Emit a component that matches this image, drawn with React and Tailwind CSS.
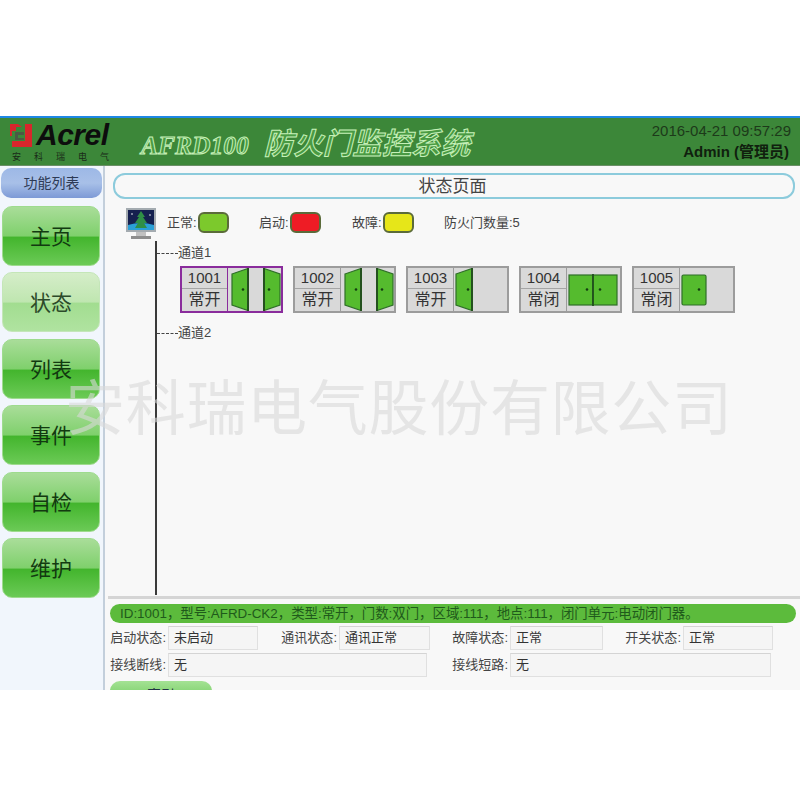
const font = "font-['Liberation_Sans','Noto_Sans_CJK_SC',sans-serif]";

const menu = [
  { label: "主页" },
  { label: "状态", active: true },
  { label: "列表" },
  { label: "事件" },
  { label: "自检" },
  { label: "维护" },
];

const doors = [
  { id: "1001", mode: "常开", type: "double-open", selected: true },
  { id: "1002", mode: "常开", type: "double-open" },
  { id: "1003", mode: "常开", type: "single-open" },
  { id: "1004", mode: "常闭", type: "double-closed" },
  { id: "1005", mode: "常闭", type: "single-closed" },
];

const DoorIcon = ({ type }) => {
  const fill = "#55bb2e";
  const line = "#2f6f28";
  const dot = "#143d10";
  return (
    <svg width="56" height="44" viewBox="0 0 56 44" className="block ml-[1px]">
      {type === "double-open" && (
        <>
          <path d="M3 6 L19 0.5 V42.5 L3 37 Z" fill={fill} stroke={line} strokeWidth="1.2" />
          <path d="M19 0 V43" stroke="#24511f" strokeWidth="2" />
          <path d="M35 0.5 L51 6 V37 L35 42.5 Z" fill={fill} stroke={line} strokeWidth="1.2" />
          <path d="M35 0 V43" stroke="#24511f" strokeWidth="2" />
          <circle cx="14" cy="21.5" r="1.3" fill={dot} />
          <circle cx="40" cy="21.5" r="1.3" fill={dot} />
        </>
      )}
      {type === "single-open" && (
        <>
          <path d="M1 6 L17 0.5 V42.5 L1 37 Z" fill={fill} stroke={line} strokeWidth="1.2" />
          <path d="M17 0 V43" stroke="#24511f" strokeWidth="2" />
          <circle cx="13" cy="21.5" r="1.3" fill={dot} />
        </>
      )}
      {type === "double-closed" && (
        <>
          <rect x="1" y="7" width="24" height="30" fill={fill} stroke={line} strokeWidth="1.2" />
          <rect x="25" y="7" width="24" height="30" fill={fill} stroke={line} strokeWidth="1.2" />
          <path d="M25 6 V38" stroke="#1f4a1b" strokeWidth="1.6" />
          <circle cx="19" cy="21.5" r="1.3" fill={dot} />
          <circle cx="32" cy="21.5" r="1.3" fill={dot} />
        </>
      )}
      {type === "single-closed" && (
        <>
          <rect x="1" y="7" width="24" height="30" rx="1.5" fill={fill} stroke={line} strokeWidth="1.2" />
          <circle cx="18" cy="21.5" r="1.3" fill={dot} />
        </>
      )}
    </svg>
  );
};

const DoorCard = ({ door }) => {
  const border = door.selected ? "border-[#8a2c9c]" : "border-[#9c9c9c]";
  return (
    <div className={`flex w-[103px] h-[47px] border-2 bg-[#d9d9d9] ${border}`}>
      <div className={`w-[46px] flex flex-col border-r ${door.selected ? "border-[#8a2c9c]" : "border-[#9c9c9c]"}`}>
        <div className="h-[21px] border-b border-[#a5a5a5] text-[15px] leading-[20px] text-center text-[#333]">{door.id}</div>
        <div className="flex-1 text-[16px] leading-[22px] text-center text-[#333]">{door.mode}</div>
      </div>
      <div className="flex-1 overflow-hidden">
        <DoorIcon type={door.type} />
      </div>
    </div>
  );
};

const Legend = ({ label, color, className }) => (
  <div className={`flex items-center mb-[4px] ${className}`}>
    <span className="w-[31px] text-[13px] text-[#444] whitespace-nowrap">{label}:</span>
    <span className={`w-[31px] h-[21px] rounded-[6px] border-2 border-[#5b6b3a] ${color}`}></span>
  </div>
);

const Field = ({ label, value, labelW, boxW, className = "" }) => (
  <div className={`flex items-center ${className}`}>
    <span className="text-[13px] text-[#444] text-right whitespace-nowrap" style={{ width: labelW }}>{label}:</span>
    <span className="h-[24px] ml-[2px] pl-[5px] border border-[#e0e0e0] border-t-[#d4d4d4] bg-[#f5f5f5] text-[13px] leading-[22px] text-[#333]" style={{ width: boxW }}>{value}</span>
  </div>
);

const Channel = ({ name, className = "" }) => (
  <div className={`flex items-center h-[20px] ${className}`}>
    <span className="w-[21px] border-t border-dashed border-[#444]"></span>
    <span className="text-[13px] text-[#444]">{name}</span>
  </div>
);

export default function App() {
  return (
    <div className={`w-[800px] h-[800px] bg-white overflow-hidden relative ${font}`}>
      <div className="h-[116px]"></div>
      <div className="h-[574px] flex flex-col overflow-hidden">
        <header className="h-[50px] shrink-0 border-t-2 border-[#1e88e5] bg-[#3c8739] flex border-b border-b-[#6a8f66]">
          <div className="w-[130px] pl-[10px] pt-[3px]">
            <div className="flex items-center h-[28px]">
              <svg width="22" height="23" viewBox="0 0 22 23" className="block shrink-0">
                <path d="M0 0 H8 L12 3 H6 V7 H2 V12 H0 Z" fill="#d8262c" />
                <path d="M15 0 H22 V23 H2 V17 H15 Z" fill="#d8262c" />
                <path d="M5 8 H14 V11 H8 V14 H14 V16 H5 Z" fill="#4a5a44" />
              </svg>
              <span className="ml-[4px] text-[30px] leading-[28px] font-bold italic text-[#0d0d0d] tracking-[-0.5px] whitespace-nowrap">Acrel</span>
            </div>
            <div className="text-[9px] leading-[12px] pt-[2px] pl-[2px] tracking-[13px] text-[#1a2a18] whitespace-nowrap">安科瑞电气</div>
          </div>
          <div className="pl-[11px] pt-[5px] leading-[42px] italic font-bold text-[#4a9a44] [-webkit-text-stroke:1px_#c6f0b8] font-['Liberation_Serif','Noto_Sans_CJK_SC',serif] whitespace-nowrap">
            <span className="text-[25.5px]">AFRD100</span>
            <span className="text-[29.5px] ml-[15px]">防火门监控系统</span>
          </div>
          <div className="ml-auto pr-[9px] pt-[2px] text-right">
            <div className="text-[15px] leading-[22px] text-[#1d3a1a]">2016-04-21 09:57:29</div>
            <div className="text-[15px] leading-[20px] font-bold text-[#10200e] pr-[2px]">Admin (管理员)</div>
          </div>
        </header>

        <div className="flex-1 flex min-h-0">
          <aside className="w-[105px] shrink-0 bg-[#f1f6fc] border-r-2 border-[#c3cfdb] pl-[1px] pt-[2px]">
            <div className="w-[101px] h-[30px] rounded-[10px] bg-gradient-to-b from-[#9db8e6] via-[#a8c0e8] to-[#7d9ad6] text-[14px] leading-[30px] text-center text-[#2d3a55]">功能列表</div>
            <nav className="flex flex-col gap-[6.4px] pt-[8px]">
              {menu.map((item) => (
                <div
                  key={item.label}
                  className={`w-[98px] h-[60px] ml-[1px] rounded-[10px] border text-[21px] leading-[60px] text-center ${
                    item.active
                      ? "border-[#c4e6b8] bg-[linear-gradient(#d5edc9_0%,#bfe6b0_50%,#a2dd90_52%,#b0e3a0_100%)] text-[#2c4a2a]"
                      : "border-[#9edb8e] bg-[linear-gradient(#a9dd99_0%,#7fd06c_50%,#43b52d_52%,#6bca56_100%)] text-[#123a10]"
                  }`}
                >
                  {item.label}
                </div>
              ))}
            </nav>
          </aside>

          <main className="flex-1 bg-[#f8f8f8] flex flex-col min-w-0 pl-[3px] overflow-hidden">
            <div className="shrink-0 mt-[7px] mr-[5px] ml-[5px] h-[26px] rounded-[12px] border-2 border-[#8ccbdc] text-[17px] leading-[24px] text-center pr-[3px] text-[#444]">状态页面</div>

            <div className="shrink-0 flex items-center h-[33px] mt-[9px] ml-[17px]">
              <svg width="34" height="33" viewBox="0 0 34 33" className="block shrink-0">
                <rect x="1" y="0" width="30" height="24" fill="#a4abb0" />
                <rect x="3" y="2" width="26" height="20" fill="#15204f" />
                <path d="M3 22 V17 Q16 13 29 17 V22 Z" fill="#2a9fd6" />
                <path d="M16 3 L20 9 H18 L22 15 H19 L22 20 H10 L13 15 H10 L14 9 H12 Z" fill="#2f8f46" />
                <circle cx="7" cy="6" r="0.8" fill="#fff" />
                <circle cx="25" cy="7" r="0.8" fill="#fff" />
                <rect x="11" y="24" width="10" height="4" fill="#c2c2c2" />
                <rect x="6" y="28" width="20" height="3" fill="#8e8e8e" />
              </svg>
              <Legend label="正常" color="bg-[#7cc92c]" className="ml-[8px]" />
              <Legend label="启动" color="bg-[#ee1c25]" className="ml-[30px]" />
              <Legend label="故障" color="bg-[#e6e619]" className="ml-[31px]" />
              <span className="ml-[30px] mb-[4px] text-[13px] text-[#444]">防火门数量:5</span>
            </div>

            <div className="shrink-0 ml-[47px] h-[354px] border-l-[2px] border-[#3a3a3a] pt-[2px]">
              <Channel name="通道1" className="mb-[3px]" />
              <div className="flex gap-[10px] ml-[23px] mt-[1px]">
                {doors.map((door) => (
                  <DoorCard key={door.id} door={door} />
                ))}
              </div>
              <Channel name="通道2" className="mt-[10px]" />
            </div>

            <div className="shrink-0 h-[3px] mt-[1px] bg-[#d5d5d5]"></div>
            <div className="shrink-0 mt-[5px] ml-[2px] mr-[4px] h-[19px] rounded-[10px] bg-[#5cbb3c] text-[13.4px] leading-[19px] pl-[10px] text-[#1f5a1b] whitespace-nowrap">
              ID:1001，型号:AFRD-CK2，类型:常开，门数:双门，区域:111，地点:111，闭门单元:电动闭门器。
            </div>
            <div className="shrink-0 flex mt-[3px] ml-[1px]">
              <Field label="启动状态" value="未启动" labelW={57} boxW={90} />
              <Field label="通讯状态" value="通讯正常" labelW={57} boxW={91} className="ml-[22px]" />
              <Field label="故障状态" value="正常" labelW={57} boxW={93} className="ml-[21px]" />
              <Field label="开关状态" value="正常" labelW={57} boxW={90} className="ml-[21px]" />
            </div>
            <div className="shrink-0 flex mt-[3px] ml-[1px]">
              <Field label="接线断线" value="无" labelW={57} boxW={259} />
              <Field label="接线短路" value="无" labelW={57} boxW={261} className="ml-[24px]" />
            </div>
            <div className="shrink-0 mt-[4px] w-[102px] h-[28px] ml-[2px] rounded-[10px] bg-gradient-to-b from-[#a4e294] to-[#5cc145] text-[14px] leading-[28px] text-center text-[#234]">索引</div>
          </main>
        </div>
      </div>

      <div className="absolute left-[65px] top-[382px] text-[60px] leading-[56px] tracking-[0.7px] text-[#d8d8d8]/60 whitespace-nowrap pointer-events-none">安科瑞电气股份有限公司</div>
    </div>
  );
}
